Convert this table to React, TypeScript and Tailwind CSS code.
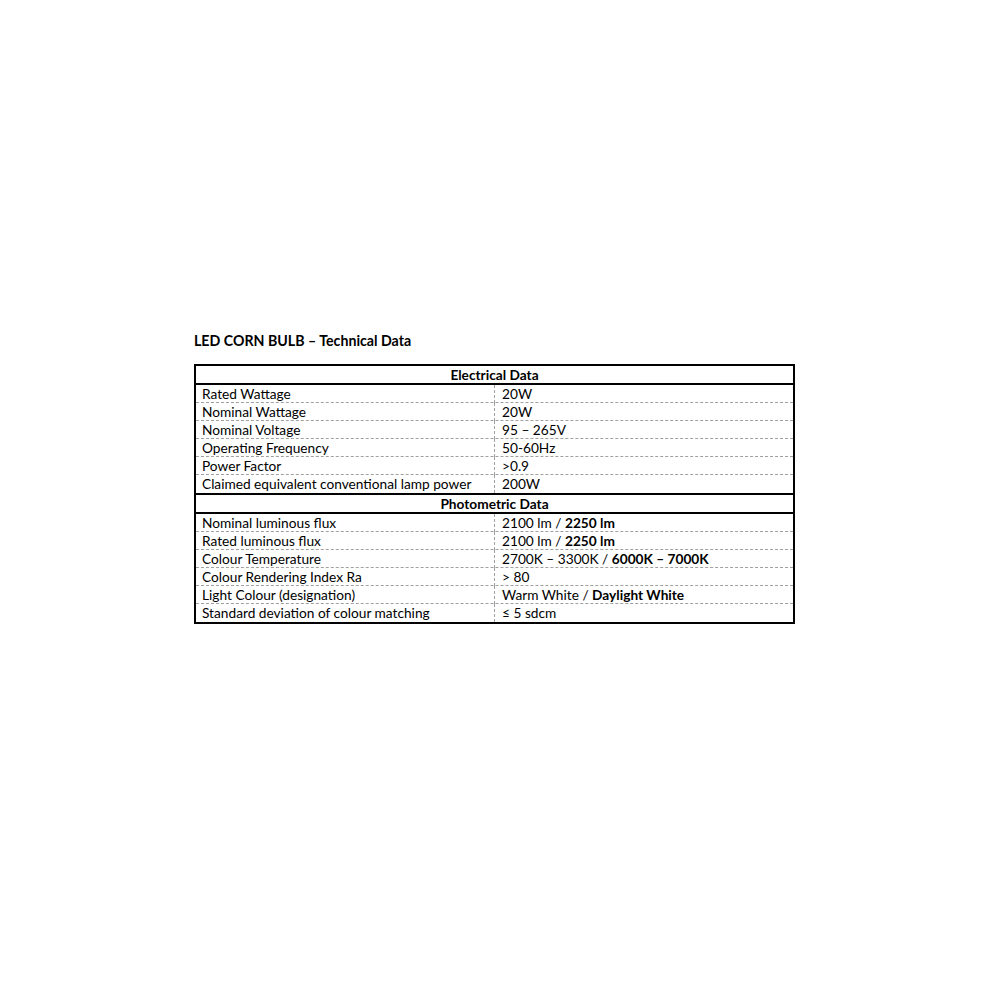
import React from "react";

type Row = { label: string; value: React.ReactNode };

const electrical: Row[] = [
  { label: "Rated Wattage", value: "20W" },
  { label: "Nominal Wattage", value: "20W" },
  { label: "Nominal Voltage", value: "95 – 265V" },
  { label: "Operating Frequency", value: "50-60Hz" },
  { label: "Power Factor", value: ">0.9" },
  { label: "Claimed equivalent conventional lamp power", value: "200W" },
];

const photometric: Row[] = [
  { label: "Nominal luminous flux", value: <>2100 lm / <b>2250 lm</b></> },
  { label: "Rated luminous flux", value: <>2100 lm / <b>2250 lm</b></> },
  { label: "Colour Temperature", value: <>2700K – 3300K / <b>6000K – 7000K</b></> },
  { label: "Colour Rendering Index Ra", value: "> 80" },
  { label: "Light Colour (designation)", value: <>Warm White / <b>Daylight White</b></> },
  { label: "Standard deviation of colour matching", value: "≤ 5 sdcm" },
];

function Rows({ rows }: { rows: Row[] }) {
  return (
    <div>
      {rows.map((r, i) => (
        <div
          key={i}
          className={
            "grid grid-cols-[298px_1fr] h-[18px] " +
            (i < rows.length - 1 ? "border-b border-dashed border-[#a0a0a0]" : "")
          }
        >
          <div className="pl-[6px] leading-[18px] whitespace-nowrap">{r.label}</div>
          <div className="pl-[7px] leading-[18px] whitespace-nowrap border-l border-dashed border-[#a0a0a0]">{r.value}</div>
        </div>
      ))}
    </div>
  );
}

export default function App() {
  return (
    <div
      className="w-[1000px] h-[1000px] bg-white text-black text-[13.7px]"
      style={{ fontFamily: "Lato, 'Open Sans', sans-serif" }}
    >
      <div className="pt-[332px] pl-[194px]">
        <div className="font-bold h-[18px] leading-[18px] text-[14.2px]">LED CORN BULB – Technical Data</div>
        <div className="mt-[14px] w-[601px] border-2 border-black">
          <div className="h-[19px] leading-[17px] text-center font-bold border-b-2 border-black">Electrical Data</div>
          <Rows rows={electrical} />
          <div className="h-[21px] leading-[17px] text-center font-bold border-y-2 border-black">Photometric Data</div>
          <Rows rows={photometric} />
        </div>
      </div>
    </div>
  );
}
